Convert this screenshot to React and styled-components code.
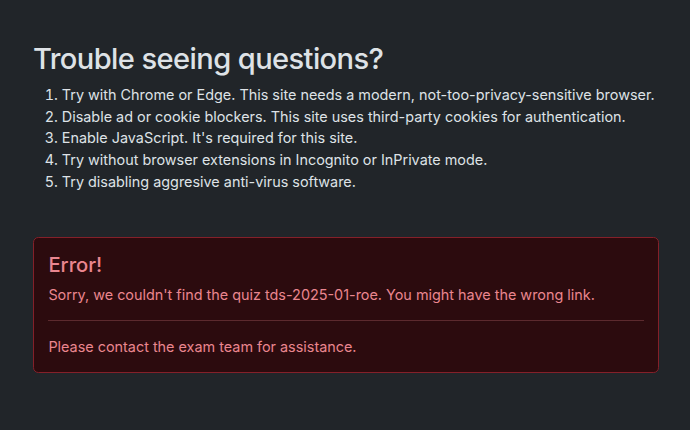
import React from 'react';
import styled, { createGlobalStyle } from 'styled-components';

const GlobalStyle = createGlobalStyle`
    html, body {
        margin: 0;
        padding: 0;
        background-color: #212529;
    }

    body {
        color: #dee2e6;
        font-family: Inter, "Noto Sans", "Liberation Sans", sans-serif;
        font-size: 14.4px;
        line-height: 1.5;
        -webkit-font-smoothing: antialiased;
    }

    *, *::before, *::after {
        box-sizing: border-box;
    }
`;

const tips = [
    "Try with Chrome or Edge. This site needs a modern, not-too-privacy-sensitive browser.",
    "Disable ad or cookie blockers. This site uses third-party cookies for authentication.",
    "Enable JavaScript. It's required for this site.",
    "Try without browser extensions in Incognito or InPrivate mode.",
    "Try disabling aggresive anti-virus software.",
];

const App = () => {
    return (
        <>
            <GlobalStyle />
            <Container>
                <Title>Trouble seeing questions?</Title>
                <TipList>
                    { tips.map((tip) => <li key={tip}>{tip}</li>) }
                </TipList>

                <Alert role="alert">
                    <AlertHeading>Error!</AlertHeading>
                    <AlertText>Sorry, we couldn't find the quiz tds-2025-01-roe. You might have the wrong link.</AlertText>
                    <Divider />
                    <AlertText $last>Please contact the exam team for assistance.</AlertText>
                </Alert>
            </Container>
        </>
    );
}

export default App;

const Container = styled.main`
    width: 626px;
    margin-left: 33px;
    padding-top: 42px;
`;

const Title = styled.h1`
    margin: 0 0 7.2px 0;
    font-size: 29.1px;
    font-weight: 500;
    line-height: 1.2;
    letter-spacing: -0.6px;
    color: #dee2e6;
`;

const TipList = styled.ol`
    margin: 0;
    padding-left: 28.8px;
    line-height: 21.65px;

    li {
        padding: 0;
    }
`;

const Alert = styled.div`
    margin-top: 45px;
    padding: 14.4px;
    color: #ea868f;
    background-color: #2c0b0e;
    border: 1px solid #842029;
    border-radius: 5.4px;
`;

const AlertHeading = styled.h4`
    margin: 0 0 7.2px 0;
    font-size: 20.2px;
    font-weight: 500;
    line-height: 1.2;
    color: inherit;
`;

const AlertText = styled.p`
    margin: 0 0 ${(props) => props.$last ? '0' : '14.4px'} 0;
    line-height: 21.6px;
`;

const Divider = styled.hr`
    margin: 14.4px 0;
    border: 0;
    border-top: 1px solid #ea868f;
    opacity: 0.25;
`;
